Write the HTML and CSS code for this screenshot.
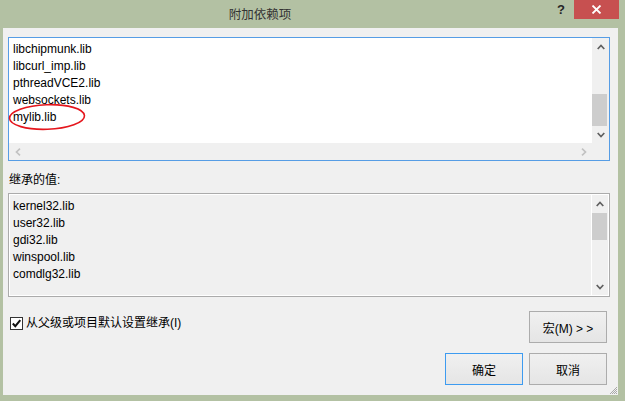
FILE: index.html
```html
<!DOCTYPE html>
<html lang="zh">
<head>
<meta charset="utf-8">
<title>附加依赖项</title>
<link rel="stylesheet" href="styles.css">
</head>
<body>
<div class="window">
  <div class="titlebar">
    <div class="title">附加依赖项</div>
    <div class="help">?</div>
    <div class="close">
      <svg width="11" height="9" viewBox="0 0 11 9"><path d="M1.5 0.5 L9.5 8.5 M9.5 0.5 L1.5 8.5" stroke="#fff" stroke-width="1.8" fill="none"/></svg>
    </div>
  </div>
  <div class="client">
    <div class="lb1">
      <div class="items items1">
        <div class="item">libchipmunk.lib</div>
        <div class="item">libcurl_imp.lib</div>
        <div class="item">pthreadVCE2.lib</div>
        <div class="item">websockets.lib</div>
        <div class="item">mylib.lib</div>
      </div>
      <div class="vscroll">
        <div class="sbtn"><svg width="8" height="6" viewBox="0 0 8 6"><polyline points="0.7,5 4,1.5 7.3,5" class="chev"/></svg></div>
        <div class="track track1"><div class="thumb thumb1"></div></div>
        <div class="sbtn"><svg width="8" height="6" viewBox="0 0 8 6"><polyline points="0.7,1 4,4.5 7.3,1" class="chev"/></svg></div>
      </div>
      <div class="hscroll">
        <div class="hbtn"><svg width="6" height="8" viewBox="0 0 6 8"><polyline points="5,0.7 1.5,4 5,7.3" class="chev dis"/></svg></div>
        <div class="htrack"></div>
        <div class="hbtn"><svg width="6" height="8" viewBox="0 0 6 8"><polyline points="1,0.7 4.5,4 1,7.3" class="chev dis"/></svg></div>
      </div>
      <div class="corner"></div>
      <svg class="mark" width="82" height="30" viewBox="0 0 82 30"><ellipse cx="40" cy="14" rx="37.5" ry="12.3" transform="rotate(-2 40 14)" fill="none" stroke="#e5161d" stroke-width="1.6"/></svg>
    </div>

    <div class="label">继承的值:</div>

    <div class="lb2">
      <div class="wrap">
        <div class="items items2">
          <div class="item">kernel32.lib</div>
          <div class="item">user32.lib</div>
          <div class="item">gdi32.lib</div>
          <div class="item">winspool.lib</div>
          <div class="item">comdlg32.lib</div>
        </div>
        <div class="vscroll vscroll2">
          <div class="sbtn"><svg width="8" height="6" viewBox="0 0 8 6"><polyline points="0.7,5 4,1.5 7.3,5" class="chev"/></svg></div>
          <div class="track track2"><div class="thumb thumb2"></div></div>
          <div class="sbtn"><svg width="8" height="6" viewBox="0 0 8 6"><polyline points="0.7,1 4,4.5 7.3,1" class="chev"/></svg></div>
        </div>
      </div>
    </div>

    <div class="row row1">
      <label class="check">
        <span class="box"><svg width="11" height="11" viewBox="0 0 11 11"><polyline points="1.8,5.5 4.3,8.2 9.3,2.2" fill="none" stroke="#111" stroke-width="2"/></svg></span>
        <span class="check-text">从父级或项目默认设置继承(I)</span>
      </label>
      <div class="btn macro">宏(M) &gt; &gt;</div>
    </div>

    <div class="row row2">
      <div class="btn default">确定</div>
      <div class="btn">取消</div>
    </div>

    <svg class="grip" width="9" height="9" viewBox="0 0 9 9">
      <rect x="7" y="1" width="1" height="1" fill="#a8a8a8"/>
      <rect x="6" y="2" width="1" height="1" fill="#a8a8a8"/>
      <rect x="5" y="3" width="1" height="1" fill="#a8a8a8"/>
      <rect x="7" y="3" width="1" height="1" fill="#a8a8a8"/>
      <rect x="4" y="4" width="1" height="1" fill="#a8a8a8"/>
      <rect x="6" y="4" width="1" height="1" fill="#a8a8a8"/>
      <rect x="3" y="5" width="1" height="1" fill="#a8a8a8"/>
      <rect x="5" y="5" width="1" height="1" fill="#a8a8a8"/>
      <rect x="7" y="5" width="1" height="1" fill="#a8a8a8"/>
      <rect x="2" y="6" width="1" height="1" fill="#a8a8a8"/>
      <rect x="4" y="6" width="1" height="1" fill="#a8a8a8"/>
      <rect x="6" y="6" width="1" height="1" fill="#a8a8a8"/>
      <rect x="1" y="7" width="1" height="1" fill="#a8a8a8"/>
      <rect x="3" y="7" width="1" height="1" fill="#a8a8a8"/>
      <rect x="5" y="7" width="1" height="1" fill="#a8a8a8"/>
      <rect x="7" y="7" width="1" height="1" fill="#a8a8a8"/>
    </svg>
  </div>
</div>
</body>
</html>
```

FILE: styles.css
```css
* { box-sizing: border-box; }

html, body {
  margin: 0;
  padding: 0;
}

body {
  width: 625px;
  height: 401px;
  overflow: hidden;
  background: #b3c1a3;
  font-family: "Liberation Sans", "Noto Sans CJK SC", sans-serif;
  font-size: 12px;
  color: #000;
}

.window {
  width: 625px;
  height: 401px;
}

.titlebar {
  display: flex;
  align-items: flex-start;
  height: 28px;
}

.title {
  width: 520px;
  text-align: center;
  line-height: 28px;
  font-size: 12.5px;
  color: #333;
  font-family: "Noto Sans CJK SC", sans-serif;
}

.help {
  margin-left: 37px;
  width: 8px;
  line-height: 20px;
  font-weight: bold;
  font-size: 13px;
  color: #262626;
}

.close {
  margin-left: 9px;
  width: 45px;
  height: 19px;
  background: #c75050;
  display: flex;
  align-items: center;
  justify-content: center;
}

.client {
  position: relative;
  margin-left: 3px;
  width: 615px;
  height: 367px;
  background: #f0f0f0;
  padding: 9px 8px 0 5px;
  display: flex;
  flex-direction: column;
}

/* list box 1 */
.lb1 {
  position: relative;
  height: 124px;
  border: 1px solid #569de5;
  display: grid;
  grid-template-columns: 1fr 17px;
  grid-template-rows: 1fr 17px;
  background: #fff;
}

.items {
  line-height: 17px;
  white-space: nowrap;
  overflow: hidden;
}

.items1 {
  background: #fff;
  padding: 3px 0 0 4px;
}

.vscroll {
  background: #f0f0f0;
  display: flex;
  flex-direction: column;
}

.sbtn {
  height: 17px;
  flex: 0 0 17px;
  display: flex;
  align-items: center;
  justify-content: center;
}

.track {
  flex: 1;
  display: flex;
  flex-direction: column;
}

.track1 {
  justify-content: flex-end;
}

.thumb {
  background: #cdcdcd;
  margin: 0 2px 0 0;
}

.thumb1 {
  height: 32px;
}

.hscroll {
  background: #f0f0f0;
  display: flex;
}

.hbtn {
  width: 17px;
  display: flex;
  align-items: center;
  justify-content: center;
}

.htrack {
  flex: 1;
}

.corner {
  background: #f0f0f0;
}

.chev {
  fill: none;
  stroke: #606060;
  stroke-width: 1.7;
}

.chev.dis {
  stroke: #c2c2c2;
}

.mark {
  position: absolute;
  left: -2px;
  top: 65px;
}

/* label */
.label {
  margin-top: 11px;
  line-height: 17px;
  padding-left: 1px;
}

/* list box 2 */
.lb2 {
  margin-top: 4px;
  height: 104px;
  border: 1px solid #ababab;
  padding: 1px;
  background: #fff;
}

.wrap {
  height: 100%;
  display: flex;
  background: #f0f0f0;
}

.items2 {
  flex: 1;
  padding: 3px 0 0 3px;
}

.vscroll2 {
  width: 17px;
  flex: 0 0 17px;
  border-left: 1px solid #fff;
}

.track2 {
  justify-content: flex-start;
  padding-top: 1px;
}

.thumb2 {
  height: 27px;
  margin-right: 1px;
}

/* rows */
.row {
  display: flex;
}

.row1 {
  margin-top: 14px;
  justify-content: space-between;
  align-items: flex-start;
}

.row2 {
  margin-top: 10px;
  justify-content: flex-end;
  gap: 6px;
  padding-right: 3px;
}

.check {
  display: flex;
  align-items: center;
  gap: 3px;
  margin-top: 6px;
  margin-left: 2px;
  height: 13px;
}

.box {
  width: 13px;
  height: 13px;
  border: 1px solid #333;
  background: #fff;
  display: flex;
  align-items: center;
  justify-content: center;
}

.check-text {
  line-height: 13px;
}

.btn {
  width: 78px;
  height: 32px;
  border: 1px solid #acacac;
  background: linear-gradient(#f0f0f0, #e5e5e5);
  display: flex;
  align-items: center;
  justify-content: center;
}

.macro {
  margin-right: 3px;
}

.btn.default {
  border-color: #3d9bf0;
}

.grip {
  position: absolute;
  right: 0;
  bottom: 0;
}
```
